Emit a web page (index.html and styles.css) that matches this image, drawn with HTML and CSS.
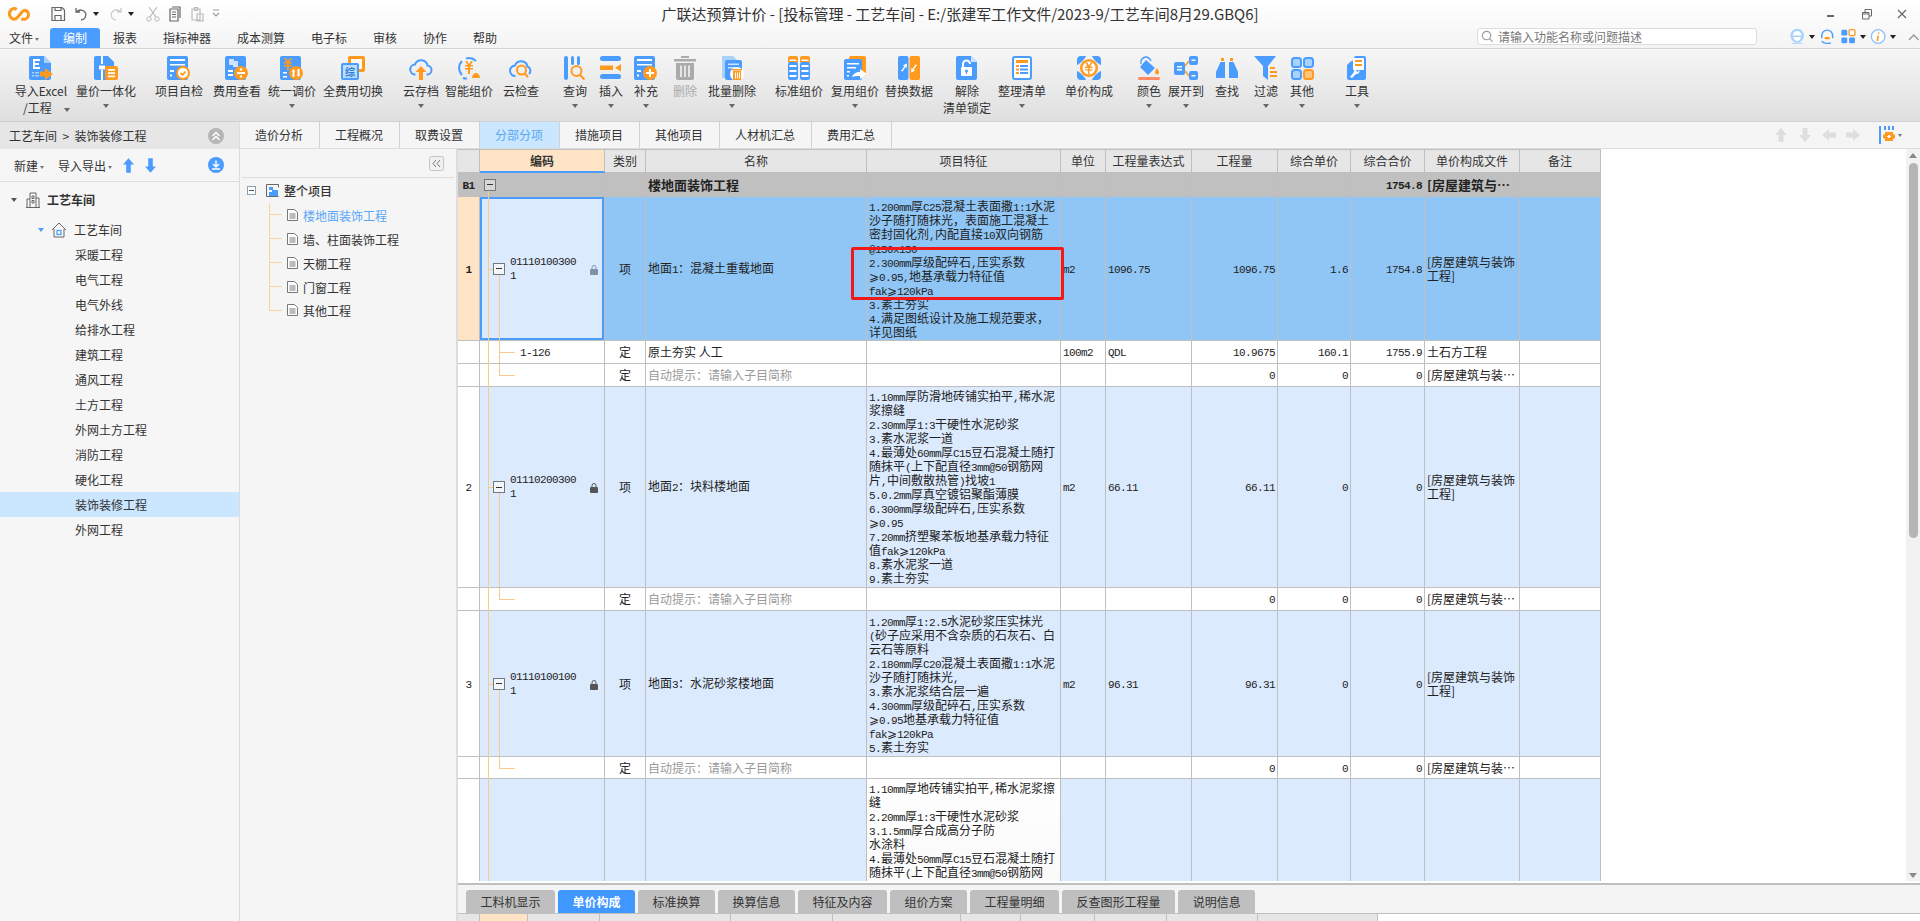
FILE: index.html
```html
<!DOCTYPE html>
<html lang="zh-CN">
<head>
    <meta charset="UTF-8">
    <title>广联达预算计价</title>
    <link rel="stylesheet" href="styles.css">
</head>
<body>
<div class="app">
    <div class="top">
        <div class="titlebar">
            <div class="quick">
                <svg class="logo" viewBox="0 0 24 18"><path d="M9.500 3.500C7 1.500 3.500 2.500 2.200 5.500S2 12 4.500 13.500c2 1 4 .5 5.500-1L15.500 6c1.500-1.500 3.500-2 5.300-.5s2 4.500.7 6.500-4.500 3-7 1.500" fill="none" stroke="#ff9a1f" stroke-width="3.400"/></svg>
                <svg class="qi q-save" viewBox="0 0 16 16"><path d="M2 1.500h10l2.500 2.500v10.500h-12.500zM5 14.500v-5h6v5M5 1.500v3h6v-3" fill="none" stroke="#666" stroke-width="1.200"/></svg>
                <svg class="qi q-undo" viewBox="0 0 16 16"><path d="M3 2v4h4M3.500 6C6 3 11 3.500 12.500 7s-1 6.500-4.500 7" fill="none" stroke="#666" stroke-width="1.300"/></svg>
                <i class="tri-dark"></i>
                <svg class="qi q-redo" viewBox="0 0 16 16"><path d="M13 2v4h-4M12.500 6C10 3 5 3.500 3.500 7s1 6.500 4.500 7" fill="none" stroke="#ccc" stroke-width="1.300"/></svg>
                <i class="tri-dark"></i>
                <svg class="qi q-cut" viewBox="0 0 16 16"><path d="M4 1l7 10M12 1l-7 10" stroke="#bbb" fill="none" stroke-width="1.200"/><circle cx="4" cy="13" r="2.200" fill="none" stroke="#bbb"/><circle cx="12" cy="13" r="2.200" fill="none" stroke="#bbb"/></svg>
                <svg class="qi q-copy" viewBox="0 0 16 16"><path d="M5 1h8v11M3 3h8v12H3zM5 6h4M5 8.500h4M5 11h4" fill="none" stroke="#666" stroke-width="1.200"/></svg>
                <svg class="qi q-paste" viewBox="0 0 16 16"><path d="M3 3h8v11H3zM5.500 1.500h3v3h-3zM8 8h6v7H8z" fill="none" stroke="#bbb" stroke-width="1.200"/></svg>
                <svg class="q-more" viewBox="0 0 8 10"><path d="M1 1h6M1 4l3 3 3-3" fill="none" stroke="#999" stroke-width="1.100"/></svg>
            </div>
            <div class="doc-title">广联达预算计价 - [投标管理 - 工艺车间 - E:/张建军工作文件/2023-9/工艺车间8月29.GBQ6]</div>
            <div class="win-btns">
                <svg class="win" viewBox="0 0 12 12"><path d="M1 7h7v2H1z" fill="#666"/></svg>
                <svg class="win" viewBox="0 0 12 12"><path d="M1.500 4.500h6.500v6.500H1.500zM4 4.500V1.500h6.500v6.500H8M1.500 6h6.500" fill="none" stroke="#666"/></svg>
                <svg class="win" viewBox="0 0 12 12"><path d="M2 2l8 8M10 2l-8 8" fill="none" stroke="#666" stroke-width="1.200"/></svg>
            </div>
        </div>
        <div class="menubar">
            <div class="menu-file">文件<i class="tri-small"></i></div>
            <div class="menu-item active">编制</div>
            <div class="menu-item">报表</div>
            <div class="menu-item">指标神器</div>
            <div class="menu-item">成本测算</div>
            <div class="menu-item">电子标</div>
            <div class="menu-item">审核</div>
            <div class="menu-item">协作</div>
            <div class="menu-item">帮助</div>
            <div class="search">
                <svg class="search-ic" viewBox="0 0 14 14"><circle cx="6" cy="6" r="4.500" fill="none" stroke="#999" stroke-width="1.200"/><path d="M9.500 9.500l3 3" stroke="#999" stroke-width="1.200"/></svg>
                <span>请输入功能名称或问题描述</span>
            </div>
            <div class="user-icons">
                <svg class="ui" viewBox="0 0 18 18"><circle cx="9" cy="8" r="7.500" fill="#a9d2fb"/><path d="M4 8a5 5 0 0110 0z" fill="#fff"/><path d="M5 9.500h8c0 3-2 4.500-4 4.500s-4-1.500-4-4.500z" fill="#fff"/><path d="M2 17c2-2 12-2 14 0z" fill="#a9d2fb"/></svg>
                <i class="tri-dark"></i>
                <svg class="ui" viewBox="0 0 18 18"><path d="M3 11V8a6 6 0 0112 0v3" fill="none" stroke="#4a9cff" stroke-width="1.600"/><path d="M3 14c2 3 8 3 10 2" fill="none" stroke="#4a9cff" stroke-width="1.500"/><rect x="6" y="9.500" width="6" height="2.500" rx="1.200" fill="#ff9a1f"/></svg>
                <svg class="ui" viewBox="0 0 18 18"><rect x="1.500" y="1.500" width="6.500" height="6.500" rx="1.500" fill="#4a9cff"/><rect x="10" y="1.500" width="6.500" height="6.500" rx="1.500" fill="#fff" stroke="#ff9a1f" stroke-width="1.500"/><rect x="1.500" y="10" width="6.500" height="6.500" rx="1.500" fill="#4a9cff"/><rect x="10" y="10" width="6.500" height="6.500" rx="1.500" fill="#4a9cff"/></svg>
                <i class="tri-dark"></i>
                <svg class="ui" viewBox="0 0 18 18"><circle cx="9" cy="9" r="7.500" fill="#fff" stroke="#8ec2f8" stroke-width="1.500"/><path d="M9.500 4.500v1.500M9 8l-1 6" stroke="#ff9a1f" stroke-width="1.800" fill="none"/></svg>
                <i class="tri-dark"></i>
                <svg class="ui ui-up" viewBox="0 0 12 8"><path d="M1 7l5-5 5 5" fill="none" stroke="#999" stroke-width="1.500"/></svg>
            </div>
        </div>
    </div>

    <div class="ribbon">
        <div class="rb w52">
            <svg class="ic" viewBox="0 0 24 24"><path class="b" d="M2 0h13l7 7v15a2 2 0 01-2 2H2a2 2 0 01-2-2V2a2 2 0 012-2z"/><path fill="#a9d2fb" d="M15 0l7 7h-7z"/><path class="w" d="M4 3h7v2H6v2h4v2H6v2h5v2H4z"/><path fill="#a9d2fb" d="M3 16h2v1.500H3zM6 16h4v1.500H6zM3 19h2v1.500H3zM6 19h4v1.500H6z"/><path class="o" d="M11 15.500h5V12l8 6-8 6v-3.500h-5z"/></svg>
            <span class="rb-t">导入Excel</span>
            <span class="rb-t rb-t2">/工程<i class="tri drop-side"></i></span>
        </div>
        <div class="rb w60 g9">
            <svg class="ic" viewBox="0 0 24 24"><path class="b" d="M2 0h12l6 6v18H2a2 2 0 01-2-2V2a2 2 0 012-2z"/><path class="w" d="M7 0h2v8H7zM7 14h2v10H7zM5 9.500h6v4H5z"/><rect class="o" x="11" y="10" width="13" height="14" rx="2"/><path class="w" d="M14 13h7v1.800h-7zM14 16.200h7V18h-7zM14 19.400h7v1.800h-7z"/></svg>
            <span class="rb-t">量价一体化</span><i class="tri drop"></i>
        </div>
        <div class="rb w48 g19">
            <svg class="ic" viewBox="0 0 24 24"><rect class="b" y="0" width="21" height="24" rx="2"/><path class="w" d="M3 3h15v2H3zM3 8h15v1.500H3zM3 14h4v2H3zM3 18.500h2v2H3z"/><circle class="o" cx="16" cy="17" r="7"/><circle class="w" cx="16" cy="17" r="5"/><path d="M13.500 17l2 2 3-3.500" fill="none" stroke="#ff9a1f" stroke-width="1.800"/></svg>
            <span class="rb-t">项目自检</span>
        </div>
        <div class="rb w48 g10">
            <svg class="ic" viewBox="0 0 24 24"><rect class="b" width="21" height="24" rx="2"/><path fill="#cfe4fc" d="M4 3h5v6H4zM8 5h5v6H8z"/><path class="w" d="M3 14h5v2H3zM3 18h5v2H3z"/><circle class="o" cx="16" cy="17" r="7"/><path class="w" d="M12 16h8v2h-8zM14.800 12.500h2.400v2h-2.400zM14.800 19.500h2.400v2h-2.400z"/></svg>
            <span class="rb-t">费用查看</span>
        </div>
        <div class="rb w48 g7">
            <svg class="ic" viewBox="0 0 24 24"><rect class="b" width="21" height="24" rx="2"/><path class="o" d="M4 2h2l2 3 2-3h2l-2.500 4H12v1.500H9V9h3v1.500H9V14H7v-3.500H4V9h3V7.500H4V6h2.500z"/><path class="w" d="M3 16h4v1.500H3zM3 20h4v1.500H3z"/><circle class="o" cx="16" cy="17" r="7"/><path class="w" d="M13.500 13l2 2.500h-1V21h-2v-5.500h-1zM18.500 21l-2-2.500h1V13h2v5.500h1z"/></svg>
            <span class="rb-t">统一调价</span><i class="tri drop"></i>
        </div>
        <div class="rb w60 g7">
            <svg class="ic" viewBox="0 0 24 24"><rect class="o" x="7" y="0" width="17" height="16" rx="2"/><rect x="10" y="3" width="11" height="10" fill="#fff8ee"/><rect x="0" y="7" width="18" height="17" rx="2" fill="#4a9cff"/><rect x="2" y="9" width="14" height="13" fill="#bcdcfc"/><text x="9" y="19.500" class="ic-t">综</text></svg>
            <span class="rb-t">全费用切换</span>
        </div>
        <div class="rb w36 g20">
            <svg class="ic" viewBox="0 0 24 24"><path d="M6.500 18.500a5 5 0 01-.5-10 6.500 6.500 0 0112.500 1 4.500 4.500 0 01-1 9" fill="none" stroke="#4a9cff" stroke-width="2"/><path class="o" d="M12 10l5.500 6H14v8h-4v-8H6.500z"/></svg>
            <span class="rb-t">云存档</span><i class="tri drop"></i>
        </div>
        <div class="rb w48 g6">
            <svg class="ic" viewBox="0 0 24 24"><path d="M5 19A10 10 0 015 5M9 2.500A10 10 0 0119 5" fill="none" stroke="#4a9cff" stroke-width="2"/><path d="M6 22a10 10 0 004 .5" fill="none" stroke="#4a9cff" stroke-width="2"/><path class="o" d="M8 5h2l2 3 2-3h2l-2.500 4H16v1.500h-3V12h3v1.500h-3V18h-2v-4.500H8V12h3v-1.500H8V9h2.500zM15 22c0-3 2-5 4-5s4 2 4 5z"/></svg>
            <span class="rb-t">智能组价</span>
        </div>
        <div class="rb w36 g10">
            <svg class="ic" viewBox="0 0 24 24"><path d="M6.500 20a5 5 0 01-.5-10.500 6.500 6.500 0 0112.500 1 4.500 4.500 0 011.500 7.500" fill="none" stroke="#4a9cff" stroke-width="2"/><circle cx="12.500" cy="14" r="4.500" fill="none" stroke="#ff9a1f" stroke-width="2"/><path d="M15.500 17.500l3.500 3.500" stroke="#ff9a1f" stroke-width="2.200"/></svg>
            <span class="rb-t">云检查</span>
        </div>
        <div class="rb w24 g24">
            <svg class="ic" viewBox="0 0 24 24"><rect class="b" x="1" width="4" height="24" rx="2"/><rect class="b" x="8" width="3" height="9" rx="1.500"/><rect class="b" x="14" width="3" height="9" rx="1.500"/><circle cx="13.500" cy="15" r="5" fill="none" stroke="#ff9a1f" stroke-width="2"/><path d="M17 19l4.500 4.500" stroke="#ff9a1f" stroke-width="2.200"/></svg>
            <span class="rb-t">查询</span><i class="tri drop"></i>
        </div>
        <div class="rb w24 g12">
            <svg class="ic" viewBox="0 0 24 24"><rect class="b" x="1" y="0" width="21" height="5" rx="2.500"/><path class="o" d="M1 9.500h13V14H1zM16 11.700l6-3.700v7.500z"/><rect class="b" x="1" y="18" width="21" height="5" rx="2.500"/></svg>
            <span class="rb-t">插入</span><i class="tri drop"></i>
        </div>
        <div class="rb w24 g11">
            <svg class="ic" viewBox="0 0 24 24"><rect class="b" width="21" height="24" rx="2"/><path class="w" d="M3 3h15v2H3zM3 8h15v1.500H3zM3 14h4v2H3zM3 18.500h2v2H3z"/><circle class="o" cx="16" cy="17" r="7"/><path class="w" d="M12 16h8v2h-8zM15 13h2v8h-2z"/></svg>
            <span class="rb-t">补充</span><i class="tri drop"></i>
        </div>
        <div class="rb w24 g15 off">
            <svg class="ic" viewBox="0 0 24 24"><path fill="#aaa" d="M1 3h22v2.500H1zM8 0h8v2H8zM3 7h18v15a2 2 0 01-2 2H5a2 2 0 01-2-2z"/><path fill="#e4e4e4" d="M7 9.500h2V21H7zM11 9.500h2V21h-2zM15 9.500h2V21h-2z"/></svg>
            <span class="rb-t">删除</span>
        </div>
        <div class="rb w48 g11">
            <svg class="ic" viewBox="0 0 24 24"><path fill="#a9d2fb" d="M2 0h11l6 6v16H2z"/><rect class="b" x="5" y="4" width="17" height="20" rx="2"/><path fill="#cfe4fc" d="M8 7.500h11v1.500H8zM8 11h7v1.500H8z"/><circle class="w" cx="17" cy="18" r="7"/><path class="o" d="M12 13h10v1.500H12zM13 15h8v9h-8z"/><path class="w" d="M15 16.500h1v6h-1zM17 16.500h1v6h-1zM19 16.500h1v6h-1z"/></svg>
            <span class="rb-t">批量删除</span><i class="tri drop"></i>
        </div>
        <div class="rb w48 g19">
            <svg class="ic" viewBox="0 0 24 24"><rect class="o" x="1" width="10" height="7" rx="2"/><rect class="o" x="13" width="10" height="7" rx="2"/><rect class="b" x="1" y="6" width="10" height="18" rx="2"/><rect class="b" x="13" y="6" width="10" height="18" rx="2"/><path class="w" d="M2.500 3.500h7V5h-7zM14.500 3.500h7V5h-7zM2.500 9h7v2h-7zM14.500 9h7v2h-7zM2.500 14h7v2h-7zM14.500 14h7v2h-7zM2.500 19h7v2h-7zM14.500 19h7v2h-7z"/></svg>
            <span class="rb-t">标准组价</span>
        </div>
        <div class="rb w48 g8">
            <svg class="ic" viewBox="0 0 24 24"><rect class="o" x="6" width="17" height="20" rx="2"/><rect class="b" x="1" y="3" width="18" height="21" rx="2"/><path class="w" d="M4 7h12v1.500H4zM4 11h9v1.500H4zM4 15h3v1.500H4zM4 19h2v1.500H4z"/><path class="w" d="M9 21c1-3 4-5 8-5v-3l7 5-7 5v-3c-3 0-6 0-8 1z"/></svg>
            <span class="rb-t">复用组价</span><i class="tri drop"></i>
        </div>
        <div class="rb w48 g6">
            <svg class="ic" viewBox="0 0 24 24"><rect class="b" x="1" width="10.500" height="24" rx="2"/><rect class="o" x="12.500" width="10.500" height="24" rx="2"/><path class="w" d="M4 15l3.500-5-2-.5 4.500-2-.5 5-1-1.500-3 4.500zM20 9l-3.500 5 2 .5-4.500 2 .5-5 1 1.500 3-4.500z"/></svg>
            <span class="rb-t">替换数据</span>
        </div>
        <div class="rb w48 g10">
            <svg class="ic" viewBox="0 0 24 24"><path class="b" d="M3 0h13l6 6v16a2 2 0 01-2 2H3a2 2 0 01-2-2V2a2 2 0 012-2z"/><path fill="#cfe4fc" d="M16 0l6 6h-6z"/><rect class="w" x="6" y="11" width="11" height="9" rx="1"/><path d="M8 11V8a3.500 3.500 0 017 0" fill="none" stroke="#fff" stroke-width="2"/><circle class="b" cx="11.500" cy="15" r="1.500"/><rect class="b" x="11" y="15" width="1" height="3"/></svg>
            <span class="rb-t">解除</span>
            <span class="rb-t">清单锁定</span>
        </div>
        <div class="rb w48 g7">
            <svg class="ic" viewBox="0 0 24 24"><rect x="3" y="1" width="18" height="22" rx="2" fill="#fff" stroke="#4a9cff" stroke-width="2"/><rect class="o" x="6" y="4" width="12" height="3"/><path class="o" d="M6 9h3v2H6zM6 12.500h3v2H6zM6 16h3v2H6z"/><path class="b" d="M10 9h8v2h-8zM10 12.500h8v2h-8zM10 16h8v2h-8z"/></svg>
            <span class="rb-t">整理清单</span><i class="tri drop"></i>
        </div>
        <div class="rb w48 g19">
            <svg class="ic" viewBox="0 0 24 24"><path class="b" d="M4 0h5C8 3 3 8 0 9V4a4 4 0 014-4zM15 0h5a4 4 0 014 4v5c-3-1-8-6-9-9zM0 15c3 1 8 6 9 9H4a4 4 0 01-4-4zM24 15v5a4 4 0 01-4 4h-5c1-3 6-8 9-9z"/><circle class="o" cx="12" cy="12" r="9"/><circle class="w" cx="12" cy="12" r="6.500"/><path class="o" d="M8.500 6.500h2l1.500 3 1.500-3h2l-2.200 4h2.200V12h-3v1.200h3v1.300h-3V18h-1.500v-3.500h-3v-1.300h3V12h-3v-1.500h2.200z"/></svg>
            <span class="rb-t">单价构成</span>
        </div>
        <div class="rb w24 g24">
            <svg class="ic" viewBox="0 0 24 24"><path class="b" d="M9 4l9 8-7 7-8-8z"/><path d="M4 8c-1-4 2-7 5-7s4 2 5 4" fill="none" stroke="#4a9cff" stroke-width="1.500"/><path class="o" d="M20 12c1 2 2 3 2 4.500a2 2 0 01-4 0c0-1.500 1-2.500 2-4.500z"/><rect x="1" y="21" width="22" height="3" rx="1.500" fill="#ff8a65"/></svg>
            <span class="rb-t">颜色</span><i class="tri drop"></i>
        </div>
        <div class="rb w36 g7">
            <svg class="ic" viewBox="0 0 24 24"><rect class="b" y="6" width="11" height="13" rx="2"/><rect class="b" x="15" width="9" height="9" rx="2"/><rect class="b" x="15" y="15" width="9" height="9" rx="2"/><path class="w" d="M3 10h5v1.500H3zM3 13h5v1.500H3zM17.500 3.500h4V5h-4zM17.500 19h4v1.500h-4z"/><path d="M11 10l4-5M11 15l4 5" stroke="#ff9a1f" stroke-width="1.500"/></svg>
            <span class="rb-t">展开到</span><i class="tri drop"></i>
        </div>
        <div class="rb w24 g11">
            <svg class="ic" viewBox="0 0 24 24"><path class="o" d="M6 2h3v3H6zM15 2h3v3h-3z"/><path class="b" d="M5.500 6h4.500v10H1zM14 6h4.500L23 16v6H14zM1 16h9v6H1z"/></svg>
            <span class="rb-t">查找</span>
        </div>
        <div class="rb w24 g15">
            <svg class="ic" viewBox="0 0 24 24"><path class="b" d="M0 0h22L14 10v14l-5-4V10z"/><path class="o" d="M16 11h5v2h-5zM16 15h7v2h-7zM16 19h7v2h-7z"/></svg>
            <span class="rb-t">过滤</span><i class="tri drop"></i>
        </div>
        <div class="rb w24 g12">
            <svg class="ic" viewBox="0 0 24 24"><rect x="2" y="2" width="9" height="9" rx="2.500" fill="#a9d2fb" stroke="#4a9cff" stroke-width="2"/><rect x="14" y="2" width="9" height="9" rx="2.500" fill="#a9d2fb" stroke="#4a9cff" stroke-width="2"/><rect x="2" y="14" width="9" height="9" rx="2.500" fill="#a9d2fb" stroke="#4a9cff" stroke-width="2"/><rect x="14" y="14" width="9" height="9" rx="2.500" fill="#ffc680" stroke="#ff9a1f" stroke-width="2"/></svg>
            <span class="rb-t">其他</span><i class="tri drop"></i>
        </div>
        <div class="rb w24 g31">
            <svg class="ic" viewBox="0 0 24 24"><path class="b" d="M5 6l4-2V2a2 2 0 012-2h8a2 2 0 012 2v20a2 2 0 01-2 2H4a2 2 0 01-2-2V9z"/><rect class="w" x="8" y="2" width="11" height="12" rx="1"/><path class="o" d="M10 4h7v2h-7zM10 8h7v2h-7z"/><path class="w" d="M5 21l4-5c-.5-2 1-4 4-3.500l-2 2 1.500 1.500 2-2c.5 3-1.500 4.500-3.500 4l-4 4z"/></svg>
            <span class="rb-t">工具</span><i class="tri drop"></i>
        </div>
    </div>

    <div class="main">
        <div class="left">
            <div class="crumb">
                <span>工艺车间 &nbsp;&gt;&nbsp; 装饰装修工程</span>
                <svg class="round" viewBox="0 0 16 16"><circle cx="8" cy="8" r="8" fill="#b5b5b5"/><path d="M4.500 8L8 4.500 11.500 8M4.500 12L8 8.500l3.500 3.500" fill="none" stroke="#fff" stroke-width="1.500"/></svg>
            </div>
            <div class="left-tools">
                <span class="lt-new">新建<i class="tri-small"></i></span>
                <span class="lt-io">导入导出<i class="tri-small"></i></span>
                <svg class="lt-arrow" viewBox="0 0 12 16"><path class="b" d="M6 0l6 7H8.500v9h-5V7H0z"/></svg>
                <svg class="lt-arrow lt-down" viewBox="0 0 12 16"><path class="b" d="M6 16L0 9h3.500V0h5v9H12z"/></svg>
                <svg class="round" viewBox="0 0 16 16"><circle cx="8" cy="8" r="8" fill="#4a9cff"/><path d="M8 3.500v6M5 7l3 3 3-3M4 12h8" fill="none" stroke="#fff" stroke-width="1.500"/></svg>
            </div>
            <div class="tree">
                <div class="tree-root">
                    <i class="tri-grey"></i>
                    <svg class="tree-ic" viewBox="0 0 16 16"><path d="M1 15.500h14M2 15.500V7h3M5 15.500V1h6v14.500M11 6h3v9.500M7 4h2v2.500H7zM7 8.500h2V11H7z" fill="none" stroke="#666"/></svg>
                    <b>工艺车间</b>
                </div>
                <div class="tree-sub">
                    <i class="tri-blue"></i>
                    <svg class="tree-ic" viewBox="0 0 16 16"><path d="M1 8l7-7 7 7M3 7v8h10V7" fill="none" stroke="#666"/><rect x="6" y="8.500" width="4" height="4" fill="none" stroke="#4a9cff" stroke-width="1.200"/></svg>
                    工艺车间
                </div>
                <div class="tree-row">采暖工程</div>
                <div class="tree-row">电气工程</div>
                <div class="tree-row">电气外线</div>
                <div class="tree-row">给排水工程</div>
                <div class="tree-row">建筑工程</div>
                <div class="tree-row">通风工程</div>
                <div class="tree-row">土方工程</div>
                <div class="tree-row">外网土方工程</div>
                <div class="tree-row">消防工程</div>
                <div class="tree-row">硬化工程</div>
                <div class="tree-row selected">装饰装修工程</div>
                <div class="tree-row">外网工程</div>
            </div>
        </div>

        <div class="right">
            <div class="tabs-row">
                <div class="tab">造价分析</div>
                <div class="tab">工程概况</div>
                <div class="tab">取费设置</div>
                <div class="tab active">分部分项</div>
                <div class="tab">措施项目</div>
                <div class="tab">其他项目</div>
                <div class="tab">人材机汇总</div>
                <div class="tab">费用汇总</div>
                <div class="tab-tools">
                    <svg class="nav" viewBox="0 0 16 16"><path d="M8 1l6 7h-3.500v7h-5V8H2z"/></svg>
                    <svg class="nav" viewBox="0 0 16 16"><path d="M8 15L2 8h3.500V1h5v7H14z"/></svg>
                    <svg class="nav" viewBox="0 0 16 16"><path d="M1 8l7-6v3.500h7v5H8V14z"/></svg>
                    <svg class="nav" viewBox="0 0 16 16"><path d="M15 8L8 14v-3.500H1v-5h7V2z"/></svg>
                    <svg class="nav-set" viewBox="0 0 16 18"><path class="b" d="M0 0h2v18H0zM5 0h2v4H5zM9 0h2v4H9zM13 0h2v4h-2z"/><path class="o" d="M6 6h8v2l2 1v3l-2 1v2H6v-2l-2-1V9l2-1z"/><path class="w" d="M9 9h2v1h1v1h-1v1H9v-1H8v-1h1z"/></svg>
                    <i class="tri-small"></i>
                </div>
            </div>
            <div class="work">
                <div class="side">
                    <div class="side-tools">
                        <svg class="side-btn" viewBox="0 0 15 15"><rect x=".5" y=".5" width="14" height="14" rx="2" fill="#f0f0f0" stroke="#c4c4c4"/><path d="M7 4L4 7.500 7 11M11 4L8 7.500l3 3.500" fill="none" stroke="#777"/></svg>
                    </div>
                    <div class="side-root">
                        <svg class="side-exp" viewBox="0 0 9 9"><rect x=".5" y=".5" width="8" height="8" fill="#fff" stroke="#8aa0b5"/><path d="M2 4.500h5" stroke="#555"/></svg>
                        <svg class="side-root-ic" viewBox="0 0 13 13"><path d="M.5 .5h12v3M.5 .5v12h12" fill="none" stroke="#666"/><path class="b" d="M3 3h4v3H3zM3 8h3V6h6v6H3z"/></svg>
                        <b>整个项目</b>
                    </div>
                    <div class="side-list">
                        <div class="side-row current"><svg class="doc" viewBox="0 0 11 12"><path d="M.5 .5h7l3 3v8H.5zM2.500 5h6M2.500 7h6M2.500 9h6" fill="#fff" stroke="#777"/></svg>楼地面装饰工程</div>
                        <div class="side-row"><svg class="doc" viewBox="0 0 11 12"><path d="M.5 .5h7l3 3v8H.5zM2.500 5h6M2.500 7h6M2.500 9h6" fill="#fff" stroke="#777"/></svg>墙、柱面装饰工程</div>
                        <div class="side-row"><svg class="doc" viewBox="0 0 11 12"><path d="M.5 .5h7l3 3v8H.5zM2.500 5h6M2.500 7h6M2.500 9h6" fill="#fff" stroke="#777"/></svg>天棚工程</div>
                        <div class="side-row"><svg class="doc" viewBox="0 0 11 12"><path d="M.5 .5h7l3 3v8H.5zM2.500 5h6M2.500 7h6M2.500 9h6" fill="#fff" stroke="#777"/></svg>门窗工程</div>
                        <div class="side-row last"><svg class="doc" viewBox="0 0 11 12"><path d="M.5 .5h7l3 3v8H.5zM2.500 5h6M2.500 7h6M2.500 9h6" fill="#fff" stroke="#777"/></svg>其他工程</div>
                    </div>
                </div>

                <div class="content">
                    <div class="grid-area">
                        <div class="grid-scroll">
                            <i class="tree-rail"></i>
                            <table class="grid">
                                <colgroup>
                                    <col class="c-no"><col class="c-code"><col class="c-type"><col class="c-name"><col class="c-spec"><col class="c-unit">
                                    <col class="c-exp"><col class="c-qty"><col class="c-price"><col class="c-total"><col class="c-file"><col class="c-note">
                                </colgroup>
                                <tr class="head">
                                    <td></td><td class="head-on">编码</td><td>类别</td><td>名称</td><td>项目特征</td><td>单位</td><td>工程量表达式</td><td>工程量</td><td>综合单价</td><td>综合合价</td><td>单价构成文件</td><td>备注</td>
                                </tr>
                                <tr class="section">
                                    <td class="no"><b class="la">B1</b></td>
                                    <td class="code"><i class="exp exp-top"></i></td>
                                    <td></td>
                                    <td><b class="sec-name">楼地面装饰工程</b></td>
                                    <td></td><td></td><td></td><td></td><td></td>
                                    <td class="r"><b class="la">1754.8</b></td>
                                    <td><b class="sec-name">[房屋建筑与⋯</b></td>
                                    <td></td>
                                </tr>
                                <tr class="r1 sel">
                                    <td class="no no-on"><b class="la">1</b></td>
                                    <td class="code code-on"><i class="exp"></i><i class="v-below"></i><span class="la code-t">01110100300<br>1</span><svg class="lock lock-soft" viewBox="0 0 8 10"><path d="M2 4V2.500a2 2 0 014 0V4" fill="none" stroke="currentColor"/><rect y="4" width="8" height="6" rx="1" fill="currentColor"/></svg></td>
                                    <td class="c">项</td>
                                    <td>地面<span class="la">1</span>：混凝土重载地面</td>
                                    <td class="spec">
                                        <div><span class="la">1.200mm</span>厚<span class="la">C25</span>混凝土表面撒<span class="la">1:1</span>水泥</div>
                                        <div>沙子随打随抹光，表面施工混凝土</div>
                                        <div>密封固化剂<span class="la">,</span>内配直接<span class="la">10</span>双向钢筋</div>
                                        <div><span class="la">@150x150</span></div>
                                        <div><span class="la">2.300mm</span>厚级配碎石<span class="la">,</span>压实系数</div>
                                        <div>⩾<span class="la">0.95,</span>地基承载力特征值</div>
                                        <div><span class="la">fak</span>⩾<span class="la">120kPa</span></div>
                                        <div><span class="la">3.</span>素土夯实</div>
                                        <div><span class="la">4.</span>满足图纸设计及施工规范要求，</div>
                                        <div>详见图纸</div>
                                    </td>
                                    <td><span class="la">m2</span></td>
                                    <td><span class="la">1096.75</span></td>
                                    <td class="r"><span class="la">1096.75</span></td>
                                    <td class="r"><span class="la">1.6</span></td>
                                    <td class="r"><span class="la">1754.8</span></td>
                                    <td>[房屋建筑与装饰<br>工程]</td>
                                    <td></td>
                                </tr>
                                <tr class="r23 plain">
                                    <td class="no"></td>
                                    <td class="code"><i class="v-full"></i><i class="h-branch"></i><span class="la sub-t">1-126</span></td>
                                    <td class="c">定</td>
                                    <td>原土夯实 人工</td>
                                    <td></td>
                                    <td><span class="la">100m2</span></td>
                                    <td><span class="la">QDL</span></td>
                                    <td class="r"><span class="la">10.9675</span></td>
                                    <td class="r"><span class="la">160.1</span></td>
                                    <td class="r"><span class="la">1755.9</span></td>
                                    <td>土石方工程</td>
                                    <td></td>
                                </tr>
                                <tr class="r23 plain">
                                    <td class="no"></td>
                                    <td class="code"><i class="v-half"></i><i class="h-branch"></i></td>
                                    <td class="c">定</td>
                                    <td class="hint">自动提示：请输入子目简称</td>
                                    <td></td><td></td><td></td>
                                    <td class="r"><span class="la">0</span></td>
                                    <td class="r"><span class="la">0</span></td>
                                    <td class="r"><span class="la">0</span></td>
                                    <td>[房屋建筑与装⋯</td>
                                    <td></td>
                                </tr>
                                <tr class="r2 blue">
                                    <td class="no no-plain"><span class="la">2</span></td>
                                    <td class="code"><i class="exp"></i><i class="v-below"></i><span class="la code-t">01110200300<br>1</span><svg class="lock" viewBox="0 0 8 10"><path d="M2 4V2.500a2 2 0 014 0V4" fill="none" stroke="currentColor"/><rect y="4" width="8" height="6" rx="1" fill="currentColor"/></svg></td>
                                    <td class="c">项</td>
                                    <td>地面<span class="la">2</span>：块料楼地面</td>
                                    <td class="spec">
                                        <div><span class="la">1.10mm</span>厚防滑地砖铺实拍平<span class="la">,</span>稀水泥</div>
                                        <div>浆擦缝</div>
                                        <div><span class="la">2.30mm</span>厚<span class="la">1:3</span>干硬性水泥砂浆</div>
                                        <div><span class="la">3.</span>素水泥浆一道</div>
                                        <div><span class="la">4.</span>最薄处<span class="la">60mm</span>厚<span class="la">C15</span>豆石混凝土随打</div>
                                        <div>随抹平<span class="la">(</span>上下配直径<span class="la">3mm@50</span>钢筋网</div>
                                        <div>片<span class="la">,</span>中间敷散热管<span class="la">)</span>找坡<span class="la">1</span></div>
                                        <div><span class="la">5.0.2mm</span>厚真空镀铝聚酯薄膜</div>
                                        <div><span class="la">6.300mm</span>厚级配碎石<span class="la">,</span>压实系数</div>
                                        <div>⩾<span class="la">0.95</span></div>
                                        <div><span class="la">7.20mm</span>挤塑聚苯板地基承载力特征</div>
                                        <div>值<span class="la">fak</span>⩾<span class="la">120kPa</span></div>
                                        <div><span class="la">8.</span>素水泥浆一道</div>
                                        <div><span class="la">9.</span>素土夯实</div>
                                    </td>
                                    <td><span class="la">m2</span></td>
                                    <td><span class="la">66.11</span></td>
                                    <td class="r"><span class="la">66.11</span></td>
                                    <td class="r"><span class="la">0</span></td>
                                    <td class="r"><span class="la">0</span></td>
                                    <td>[房屋建筑与装饰<br>工程]</td>
                                    <td></td>
                                </tr>
                                <tr class="r23 plain">
                                    <td class="no"></td>
                                    <td class="code"><i class="v-half"></i><i class="h-branch"></i></td>
                                    <td class="c">定</td>
                                    <td class="hint">自动提示：请输入子目简称</td>
                                    <td></td><td></td><td></td>
                                    <td class="r"><span class="la">0</span></td>
                                    <td class="r"><span class="la">0</span></td>
                                    <td class="r"><span class="la">0</span></td>
                                    <td>[房屋建筑与装⋯</td>
                                    <td></td>
                                </tr>
                                <tr class="r3 blue">
                                    <td class="no no-plain"><span class="la">3</span></td>
                                    <td class="code"><i class="exp"></i><i class="v-below"></i><span class="la code-t">01110100100<br>1</span><svg class="lock" viewBox="0 0 8 10"><path d="M2 4V2.500a2 2 0 014 0V4" fill="none" stroke="currentColor"/><rect y="4" width="8" height="6" rx="1" fill="currentColor"/></svg></td>
                                    <td class="c">项</td>
                                    <td>地面<span class="la">3</span>：水泥砂浆楼地面</td>
                                    <td class="spec">
                                        <div><span class="la">1.20mm</span>厚<span class="la">1:2.5</span>水泥砂浆压实抹光</div>
                                        <div><span class="la">(</span>砂子应采用不含杂质的石灰石、白</div>
                                        <div>云石等原料</div>
                                        <div><span class="la">2.180mm</span>厚<span class="la">C20</span>混凝土表面撒<span class="la">1:1</span>水泥</div>
                                        <div>沙子随打随抹光<span class="la">,</span></div>
                                        <div><span class="la">3.</span>素水泥浆结合层一遍</div>
                                        <div><span class="la">4.300mm</span>厚级配碎石<span class="la">,</span>压实系数</div>
                                        <div>⩾<span class="la">0.95</span>地基承载力特征值</div>
                                        <div><span class="la">fak</span>⩾<span class="la">120kPa</span></div>
                                        <div><span class="la">5.</span>素土夯实</div>
                                    </td>
                                    <td><span class="la">m2</span></td>
                                    <td><span class="la">96.31</span></td>
                                    <td class="r"><span class="la">96.31</span></td>
                                    <td class="r"><span class="la">0</span></td>
                                    <td class="r"><span class="la">0</span></td>
                                    <td>[房屋建筑与装饰<br>工程]</td>
                                    <td></td>
                                </tr>
                                <tr class="r22 plain">
                                    <td class="no"></td>
                                    <td class="code"><i class="v-half"></i><i class="h-branch"></i></td>
                                    <td class="c">定</td>
                                    <td class="hint">自动提示：请输入子目简称</td>
                                    <td></td><td></td><td></td>
                                    <td class="r"><span class="la">0</span></td>
                                    <td class="r"><span class="la">0</span></td>
                                    <td class="r"><span class="la">0</span></td>
                                    <td>[房屋建筑与装⋯</td>
                                    <td></td>
                                </tr>
                                <tr class="r4 blue">
                                    <td class="no no-plain"></td>
                                    <td class="code"></td>
                                    <td></td>
                                    <td></td>
                                    <td class="spec top">
                                        <div><span class="la">1.10mm</span>厚地砖铺实拍平<span class="la">,</span>稀水泥浆擦</div>
                                        <div>缝</div>
                                        <div><span class="la">2.20mm</span>厚<span class="la">1:3</span>干硬性水泥砂浆</div>
                                        <div><span class="la">3.1.5mm</span>厚合成高分子防</div>
                                        <div>水涂料</div>
                                        <div><span class="la">4.</span>最薄处<span class="la">50mm</span>厚<span class="la">C15</span>豆石混凝土随打</div>
                                        <div>随抹平<span class="la">(</span>上下配直径<span class="la">3mm@50</span>钢筋网</div>
                                    </td>
                                    <td></td><td></td><td></td><td></td><td></td><td></td><td></td>
                                </tr>
                            </table>
                            <div class="mark"></div>
                        </div>
                        <div class="scrollbar">
                            <i class="sb-up"></i>
                            <div class="sb-thumb"></div>
                            <i class="sb-down"></i>
                        </div>
                    </div>
                    <div class="splitter"></div>
                    <div class="sub-tabs">
                        <div class="sub-tab">工料机显示</div>
                        <div class="sub-tab active">单价构成</div>
                        <div class="sub-tab">标准换算</div>
                        <div class="sub-tab">换算信息</div>
                        <div class="sub-tab">特征及内容</div>
                        <div class="sub-tab">组价方案</div>
                        <div class="sub-tab">工程量明细</div>
                        <div class="sub-tab">反查图形工程量</div>
                        <div class="sub-tab">说明信息</div>
                    </div>
                    <div class="sub-head">
                        <i></i><i class="sub-on"></i><i></i><i></i><i></i><i></i><i></i><i></i><i></i><i></i><i></i>
                    </div>
                </div>
            </div>
        </div>
    </div>
</div>
</body>
</html>
```

FILE: styles.css
```css
* {
    box-sizing: border-box;
}

html, body {
    margin: 0;
    height: 100%;
    overflow: hidden;
}

body {
    font-family: "Noto Sans CJK SC", sans-serif;
    font-size: 12px;
    color: #333;
    background-color: #f5f5f5;
}

.app {
    width: 1920px;
    height: 921px;
    display: flex;
    flex-direction: column;
}

/* svg fills */
.b { fill: #4a9cff; }
.o { fill: #ff9a1f; }
.w { fill: #fff; }

.ic-t {
    font-size: 10px;
    font-weight: 700;
    fill: #2f7fd8;
    text-anchor: middle;
}

/* small triangles */
.tri-dark, .tri-small, .tri {
    display: inline-block;
    width: 0;
    height: 0;
    border-style: solid;
    border-color: #555 transparent transparent;
}

.tri-dark {
    border-width: 4px 3px 0;
    border-top-color: #222;
}

.tri-small {
    border-width: 3px 2.5px 0;
    border-top-color: #777;
    margin-left: 2px;
    vertical-align: middle;
}

.tri {
    border-width: 4px 3px 0;
    border-top-color: #666;
}

/* title + menu */
.top {
    height: 49px;
    background: linear-gradient(#fff, #f4f4f4);
    border-bottom: 1px solid #d4d4d4;
}

.titlebar {
    height: 28px;
    display: grid;
    grid-template-columns: 1fr auto 1fr;
    align-items: center;
}

.quick {
    display: flex;
    align-items: center;
    padding-left: 8px;
}

.logo {
    width: 22px;
    height: 17px;
    margin-right: 20px;
}

.qi {
    width: 16px;
    height: 16px;
}

.q-undo { margin-left: 7px; margin-right: 4px; }
.q-redo { margin-left: 9px; margin-right: 4px; }
.q-cut { margin-left: 11px; }
.q-copy { margin-left: 6px; }
.q-paste { margin-left: 6px; }

.q-more {
    width: 8px;
    height: 10px;
    margin-left: 7px;
}

.doc-title {
    font-size: 15px;
    line-height: 28px;
    color: #333;
    white-space: nowrap;
}

.win-btns {
    display: flex;
    justify-content: flex-end;
    gap: 23px;
    padding-right: 12px;
}

.win {
    width: 12px;
    height: 12px;
}

.menubar {
    height: 20px;
    display: flex;
    align-items: center;
    line-height: 20px;
}

.menu-file {
    width: 50px;
    padding-left: 9px;
}

.menu-item {
    padding: 0 13px;
    height: 20px;
    white-space: nowrap;
}

.menu-item.active {
    background-color: #4a9cff;
    color: #fff;
    border-radius: 3px 3px 0 0;
}

.search {
    width: 280px;
    height: 17px;
    margin-left: auto;
    margin-top: -3px;
    display: flex;
    align-items: center;
    gap: 4px;
    padding-left: 3px;
    background-color: #fff;
    border: 1px solid #ddd;
    border-radius: 3px;
    color: #777;
    line-height: 15px;
}

.search-ic {
    width: 13px;
    height: 13px;
}

.user-icons {
    width: 163px;
    height: 20px;
    display: flex;
    align-items: center;
    padding-left: 32px;
    gap: 4px;
    margin-top: -3px;
}

.ui {
    width: 17px;
    height: 17px;
}

.ui-up {
    width: 12px;
    height: 8px;
    margin-left: 8px;
}

/* ribbon */
.ribbon {
    height: 73px;
    display: flex;
    padding: 7px 0 0 15px;
    background: linear-gradient(#f6f6f6, #dfdfdf);
    border-bottom: 1px solid #cfcfcf;
}

.rb {
    display: flex;
    flex-direction: column;
    align-items: center;
    flex: none;
}

.w24 { width: 24px; }
.w36 { width: 36px; }
.w48 { width: 48px; }
.w52 { width: 52px; }
.w60 { width: 60px; }

.g6 { margin-left: 6px; }
.g7 { margin-left: 7px; }
.g8 { margin-left: 8px; }
.g9 { margin-left: 9px; }
.g10 { margin-left: 10px; }
.g11 { margin-left: 11px; }
.g12 { margin-left: 12px; }
.g15 { margin-left: 15px; }
.g19 { margin-left: 19px; }
.g20 { margin-left: 20px; }
.g24 { margin-left: 24px; }
.g31 { margin-left: 31px; }

.ic {
    width: 24px;
    height: 24px;
    flex: none;
}

.rb-t {
    height: 17px;
    line-height: 17px;
    margin-top: 2px;
    white-space: nowrap;
}

.rb-t + .rb-t {
    margin-top: 0;
}

.rb-t2 {
    align-self: flex-start;
    padding-left: 8px;
}

.drop-side {
    margin-left: 12px;
    vertical-align: middle;
}

.drop {
    margin-top: 5px;
}

.off .rb-t {
    color: #aaa;
}

/* main area */
.main {
    flex: 1;
    display: flex;
    min-height: 0;
}

.left {
    width: 240px;
    flex: none;
    background-color: #f6f6f6;
    border-right: 1px solid #dcdcdc;
}

.crumb {
    height: 27px;
    display: flex;
    align-items: center;
    justify-content: space-between;
    padding: 0 15px 0 9px;
    background-color: #e6e6e6;
}

.round {
    width: 16px;
    height: 16px;
}

.left-tools {
    height: 33px;
    display: flex;
    align-items: center;
    padding: 0 15px 0 14px;
    border-bottom: 1px solid #ddd;
}

.lt-io {
    margin-left: 14px;
}

.lt-arrow {
    width: 11px;
    height: 15px;
    margin-left: 11px;
}

.lt-down {
    margin-left: 11px;
    margin-right: auto;
}

.tree-root {
    height: 35px;
    display: flex;
    align-items: center;
    padding-left: 11px;
}

.tree-root b {
    margin-left: 6px;
    font-size: 12px;
}

.tri-grey {
    width: 0;
    height: 0;
    border-style: solid;
    border-width: 4px 3.500px 0;
    border-color: #555 transparent transparent;
    margin-right: 8px;
}

.tree-ic {
    width: 16px;
    height: 16px;
}

.tree-sub {
    height: 25px;
    display: flex;
    align-items: center;
    gap: 7px;
    padding-left: 38px;
}

.tri-blue {
    width: 0;
    height: 0;
    border-style: solid;
    border-width: 4px 3.500px 0;
    border-color: #4a9cff transparent transparent;
}

.tree-row {
    height: 25px;
    line-height: 25px;
    padding-left: 75px;
}

.tree-row.selected {
    background-color: #cbe6ff;
}

.right {
    flex: 1;
    display: flex;
    flex-direction: column;
    min-width: 0;
}

.tabs-row {
    height: 27px;
    display: flex;
    background-color: #f5f5f5;
    border-bottom: 1px solid #ddd;
}

.tab {
    padding: 0 16px 0 15px;
    line-height: 26px;
    border-right: 1px solid #d2d2d2;
    white-space: nowrap;
}

.tab.active {
    background-color: #cbe6ff;
    color: #5aa6f5;
}

.tab-tools {
    margin-left: auto;
    display: flex;
    align-items: center;
    gap: 8px;
    padding-right: 18px;
}

.nav {
    width: 16px;
    height: 16px;
    fill: #dedede;
}

.nav-set {
    width: 16px;
    height: 18px;
    margin-left: 10px;
}

.nav-set + .tri-small {
    margin-left: -5px;
}

.work {
    flex: 1;
    display: flex;
    min-height: 0;
}

/* tree in the middle */
.side {
    width: 218px;
    flex: none;
    background-color: #f5f5f5;
    border-right: 2px solid #ddd;
}

.side-tools {
    height: 29px;
    margin: 0 2px;
    display: flex;
    align-items: center;
    justify-content: flex-end;
    padding-right: 10px;
    border-bottom: 1px solid #ddd;
}

.side-btn {
    width: 15px;
    height: 15px;
}

.side-root {
    height: 25px;
    display: flex;
    align-items: center;
    padding-left: 7px;
}

.side-root b {
    font-weight: 500;
    margin-left: 5px;
}

.side-exp {
    width: 9px;
    height: 9px;
}

.side-root-ic {
    width: 13px;
    height: 13px;
    margin-left: 10px;
}

.side-list {
    margin-left: 29px;
}

.side-row {
    position: relative;
    height: 24px;
    display: flex;
    align-items: center;
    gap: 5px;
    padding-left: 17px;
    border-left: 1px solid #fbd29a;
}

.side-row::before {
    content: "";
    position: absolute;
    left: 0;
    top: 11px;
    width: 12px;
    height: 1px;
    background-color: #fbd29a;
}

.side-row.last {
    height: 12px;
    overflow: visible;
    align-items: flex-start;
    line-height: 24px;
}

.side-row.last .doc {
    margin-top: 5px;
}

.side-row.current {
    color: #5aa6f5;
}

.doc {
    width: 11px;
    height: 12px;
    flex: none;
}

/* grid */
.content {
    flex: 1;
    min-width: 0;
    display: flex;
    flex-direction: column;
    background-color: #fff;
}

.grid-area {
    height: 732px;
    flex: none;
    display: flex;
    overflow: hidden;
}

.grid-scroll {
    position: relative;
    width: 1448px;
    flex: none;
    overflow: hidden;
}

.grid {
    width: 1143px;
    table-layout: fixed;
    border-collapse: separate;
    border-spacing: 0;
    color: #222;
    line-height: 14px;
}

.c-no { width: 22px; }
.c-code { width: 125px; }
.c-type { width: 41px; }
.c-name { width: 221px; }
.c-spec { width: 194px; }
.c-unit { width: 45px; }
.c-exp { width: 86px; }
.c-qty { width: 86px; }
.c-price { width: 73px; }
.c-total { width: 74px; }
.c-file { width: 95px; }
.c-note { width: 81px; }

.grid td {
    position: relative;
    padding: 0 2px;
    border-right: 1px solid #bfbfbf;
    border-bottom: 1px solid #bfbfbf;
    white-space: nowrap;
    overflow: hidden;
    vertical-align: middle;
}

.spec div {
    height: 14px;
    line-height: 14px;
}

.la {
    font-family: "Liberation Mono", monospace;
    font-size: 11px;
    letter-spacing: -.6px;
}

.head { height: 24px; }

.head td {
    background-color: #e6e6e6;
    border-top: 1px solid #bfbfbf;
    text-align: center;
    color: #333;
}

.head td.head-on {
    background-color: #fee4c4;
    font-weight: 700;
    border-bottom: 2px solid #4a9cff;
}

.section { height: 24px; }

.section td {
    background-color: #c0c0c0;
}

.sec-name {
    font-size: 13px;
}

.r1 { height: 144px; }
.r2 { height: 201px; }
.r3 { height: 146px; }
.r23 { height: 23px; }
.r22 { height: 22px; }
.r4 { height: 210px; }

.sel td { background-color: #90c6f6; }
.blue td { background-color: #dceafe; }
.plain td { background-color: #fff; }

.grid .no {
    text-align: center;
    padding: 0;
}

.grid .no-on { background-color: #fee4c4; }
.grid .no-plain { background-color: #fff; }

.grid .code-on {
    background-color: #dceafe;
    box-shadow: inset 0 0 0 2px #4a9cff;
}

.grid td.c { text-align: center; }
.grid td.r { text-align: right; }
.grid td.top {
    vertical-align: top;
    padding-top: 2px;
}
.grid td.hint { color: #9a9a9a; }

.code-t {
    display: block;
    margin-left: 28px;
}

.sub-t {
    margin-left: 38px;
}

.lock {
    position: absolute;
    right: 6px;
    top: 50%;
    width: 8px;
    height: 10px;
    margin-top: -4px;
    color: #555;
}

.lock-soft {
    color: #7f93a8;
}

/* expander and tree lines in the code column */
.tree-rail {
    position: absolute;
    left: 30px;
    top: 42px;
    bottom: 0;
    width: 1px;
    background-color: #fdc98a;
    z-index: 1;
}

.exp {
    position: absolute;
    left: 13px;
    top: 50%;
    width: 12px;
    height: 12px;
    margin-top: -6px;
    background: linear-gradient(#333, #333) center / 6px 1px no-repeat, #f2f6fb;
    border: 1px solid #777;
    z-index: 2;
}

.exp::before {
    content: "";
    position: absolute;
    left: -5px;
    top: 5px;
    width: 4px;
    height: 1px;
    background-color: #fdc98a;
}

.exp-top {
    left: 4px;
    background: linear-gradient(#333, #333) center / 6px 1px no-repeat, #d8d8d8;
}

.exp-top::before {
    display: none;
}

.v-below, .v-full, .v-half, .h-branch {
    position: absolute;
    background-color: #fdc98a;
}

.v-below {
    left: 19px;
    top: 50%;
    bottom: -1px;
    width: 1px;
}

.v-full {
    left: 19px;
    top: 0;
    bottom: -1px;
    width: 1px;
}

.v-half {
    left: 19px;
    top: 0;
    height: 50%;
    width: 1px;
}

.h-branch {
    left: 19px;
    top: 50%;
    width: 16px;
    height: 1px;
}

.mark {
    position: absolute;
    left: 393px;
    top: 98px;
    width: 213px;
    height: 53px;
    border: 3px solid #f01a1a;
    border-radius: 2px;
    z-index: 3;
}

.scrollbar {
    width: 14px;
    margin-left: auto;
    position: relative;
    background-color: #f2f2f2;
    display: flex;
    flex-direction: column;
    align-items: center;
}

.sb-up, .sb-down {
    width: 0;
    height: 0;
    border-style: solid;
    border-color: transparent;
    position: absolute;
}

.sb-up {
    top: 4px;
    border-width: 0 4px 5px;
    border-bottom-color: #888;
}

.sb-down {
    bottom: 3px;
    border-width: 5px 4px 0;
    border-top-color: #888;
}

.sb-thumb {
    width: 9px;
    height: 375px;
    margin-top: 14px;
    background-color: #b5b5b5;
    border-radius: 5px;
}

.splitter {
    height: 4px;
    flex: none;
    background-color: #fff;
    border-bottom: 2px solid #bfbfbf;
}

.sub-tabs {
    height: 29px;
    flex: none;
    display: flex;
    gap: 3px;
    padding: 5px 0 0 8px;
    background-color: #f4f4f4;
    border-bottom: 1px solid #bfbfbf;
}

.sub-tab {
    padding: 0 14.500px;
    line-height: 24px;
    background-color: #bfbfbf;
    border-radius: 3px 3px 0 0;
    white-space: nowrap;
}

.sub-tab.active {
    background-color: #3f97ff;
    color: #fff;
    font-weight: 700;
}

.sub-head {
    flex: 1;
    display: grid;
    grid-template-columns: 22px 48px 72px 131px 102px 128px 60px 74px 72px 91px 120px;
    justify-content: start;
}

.sub-head i {
    background-color: #e6e6e6;
    border-right: 1px solid #bfbfbf;
}

.sub-head i.sub-on {
    background-color: #fee4c4;
}
```
